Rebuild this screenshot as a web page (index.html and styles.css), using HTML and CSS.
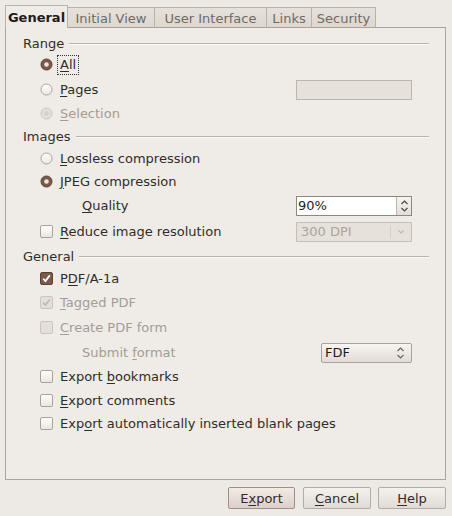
FILE: index.html
```html
<!DOCTYPE html>
<html>
<head>
<meta charset="utf-8">
<link rel="stylesheet" href="styles.css">
</head>
<body>
<div class="dialog">
  <div class="tabs">
    <div class="tab active">General</div>
    <div class="tab w-iv">Initial View</div>
    <div class="tab w-ui">User Interface</div>
    <div class="tab w-li">Links</div>
    <div class="tab w-se">Security</div>
  </div>
  <div class="panel">
    <div class="section">Range</div>
    <div class="row m0">
      <svg class="ind" viewBox="0 0 13 13"><circle cx="6.5" cy="6.5" r="5.5" fill="#7a5949" stroke="#5c4134"/><circle cx="6.5" cy="6.5" r="2.3" fill="#efe6e1"/></svg>
      <span class="label focus"><u>A</u>ll</span>
    </div>
    <div class="row m2">
      <svg class="ind" viewBox="0 0 13 13"><defs><linearGradient id="rg" x1="0" y1="0" x2="0" y2="1"><stop offset="0" stop-color="#ffffff"/><stop offset="1" stop-color="#ebe7e2"/></linearGradient></defs><circle cx="6.5" cy="6.5" r="5.5" fill="url(#rg)" stroke="#aaa299"/></svg>
      <span class="label"><u>P</u>ages</span>
      <div class="field disabled-field"></div>
    </div>
    <div class="row m1">
      <svg class="ind" viewBox="0 0 13 13"><circle cx="6.5" cy="6.5" r="5.5" fill="#e4dfda" stroke="#cbc5be"/><circle cx="6.5" cy="6.5" r="2.3" fill="#d6d0ca"/></svg>
      <span class="label dis"><u>S</u>election</span>
    </div>
    <div class="section m1">Images</div>
    <div class="row m1">
      <svg class="ind" viewBox="0 0 13 13"><circle cx="6.5" cy="6.5" r="5.5" fill="url(#rg)" stroke="#aaa299"/></svg>
      <span class="label"><u>L</u>ossless compression</span>
    </div>
    <div class="row m0">
      <svg class="ind" viewBox="0 0 13 13"><circle cx="6.5" cy="6.5" r="5.5" fill="#7a5949" stroke="#5c4134"/><circle cx="6.5" cy="6.5" r="2.3" fill="#efe6e1"/></svg>
      <span class="label"><u>J</u>PEG compression</span>
    </div>
    <div class="row m1 indent">
      <span class="label"><u>Q</u>uality</span>
      <div class="field spin">
        <span class="spin-text">90%</span>
        <span class="spin-btn">
          <svg viewBox="0 0 9 14" width="9" height="14"><path d="M1.5 5 L4.5 2 L7.5 5 M1.5 9 L4.5 12 L7.5 9" fill="none" stroke="#4d4843" stroke-width="1.2"/></svg>
        </span>
      </div>
    </div>
    <div class="row m3">
      <svg class="ind" viewBox="0 0 13 13"><defs><linearGradient id="cg" x1="0" y1="0" x2="0" y2="1"><stop offset="0" stop-color="#ffffff"/><stop offset="1" stop-color="#e9e5e0"/></linearGradient></defs><rect x="0.5" y="0.5" width="12" height="12" rx="1.5" fill="url(#cg)" stroke="#aaa299"/></svg>
      <span class="label"><u>R</u>educe image resolution</span>
      <div class="field combo-dis">
        <span class="combo-text">300 DPI</span>
        <span class="combo-arrow">
          <svg viewBox="0 0 8 6" width="8" height="6"><path d="M1.5 1.5 L4 4 L6.5 1.5" fill="none" stroke="#bdb6ae" stroke-width="1.1"/></svg>
        </span>
      </div>
    </div>
    <div class="section m3">General</div>
    <div class="row m1">
      <svg class="ind" viewBox="0 0 13 13"><rect x="0.5" y="0.5" width="12" height="12" rx="1.5" fill="#7a5949" stroke="#5c4134"/><path d="M3.2 6.6 L5.4 9 L9.8 3.4" fill="none" stroke="#ffffff" stroke-width="1.8"/></svg>
      <span class="label">P<u>D</u>F/A-1a</span>
    </div>
    <div class="row m1">
      <svg class="ind" viewBox="0 0 13 13"><rect x="0.5" y="0.5" width="12" height="12" rx="1.5" fill="#e4dfda" stroke="#cbc5be"/><path d="M3.2 6.6 L5.4 9 L9.8 3.4" fill="none" stroke="#bfb8b1" stroke-width="1.6"/></svg>
      <span class="label dis"><u>T</u>agged PDF</span>
    </div>
    <div class="row m2">
      <svg class="ind" viewBox="0 0 13 13"><rect x="0.5" y="0.5" width="12" height="12" rx="1.5" fill="#e4dfda" stroke="#cbc5be"/></svg>
      <span class="label dis"><u>C</u>reate PDF form</span>
    </div>
    <div class="row m2 indent">
      <span class="label dis">Submit <u>f</u>ormat</span>
      <div class="field combo">
        <span class="combo-text dark">FDF</span>
        <span class="combo-updown">
          <svg viewBox="0 0 9 14" width="9" height="14"><path d="M1.5 5 L4.5 2 L7.5 5 M1.5 9 L4.5 12 L7.5 9" fill="none" stroke="#6a645e" stroke-width="1.2"/></svg>
        </span>
      </div>
    </div>
    <div class="row m1">
      <svg class="ind" viewBox="0 0 13 13"><rect x="0.5" y="0.5" width="12" height="12" rx="1.5" fill="url(#cg)" stroke="#aaa299"/></svg>
      <span class="label">Export <u>b</u>ookmarks</span>
    </div>
    <div class="row m1">
      <svg class="ind" viewBox="0 0 13 13"><rect x="0.5" y="0.5" width="12" height="12" rx="1.5" fill="url(#cg)" stroke="#aaa299"/></svg>
      <span class="label"><u>E</u>xport comments</span>
    </div>
    <div class="row m0">
      <svg class="ind" viewBox="0 0 13 13"><rect x="0.5" y="0.5" width="12" height="12" rx="1.5" fill="url(#cg)" stroke="#aaa299"/></svg>
      <span class="label">Exp<u>o</u>rt automatically inserted blank pages</span>
    </div>
  </div>
  <div class="buttons">
    <div class="btn default">E<u>x</u>port</div>
    <div class="btn"><u>C</u>ancel</div>
    <div class="btn"><u>H</u>elp</div>
  </div>
</div>
</body>
</html>
```

FILE: styles.css
```css
html, body {
  margin: 0;
  padding: 0;
}
body {
  width: 452px;
  height: 516px;
  background: #ede9e4;
  font-family: "DejaVu Sans", "Liberation Sans", sans-serif;
  font-size: 13px;
  color: #2f2d2b;
  overflow: hidden;
}
u {
  text-decoration: underline;
  text-underline-offset: 2px;
}
.dialog {
  display: flex;
  flex-direction: column;
  padding-top: 5px;
}
.tabs {
  display: flex;
  align-items: flex-end;
  padding-left: 5px;
  height: 23px;
  margin-bottom: -1px;
  position: relative;
  z-index: 1;
}
.tab {
  box-sizing: border-box;
  height: 20px;
  margin-bottom: 1px;
  border: 1px solid #bab3aa;
  border-bottom: none;
  border-left: none;
  background: linear-gradient(#e6e1db, #ddd7d0);
  color: #6f6a65;
  display: flex;
  align-items: center;
  justify-content: center;
  padding-top: 1px;
  white-space: nowrap;
}
.tab.active {
  width: 63px;
  height: 23px;
  margin-bottom: 0;
  border-left: 1px solid #bab3aa;
  border-right: 1px solid #bab3aa;
  background: #efebe7;
  color: #1f1d1b;
  font-weight: bold;
  padding-top: 0;
}
.w-iv { width: 87px; }
.w-ui { width: 112px; }
.w-li { width: 45px; }
.w-se { width: 64px; }

.panel {
  box-sizing: border-box;
  margin-left: 5px;
  width: 441px;
  height: 453px;
  border: 1px solid #aaa39b;
  background: #efebe7;
  padding-top: 5px;
  display: flex;
  flex-direction: column;
}
.section {
  height: 20px;
  display: flex;
  align-items: center;
  gap: 5px;
  padding-left: 17px;
  padding-right: 16px;
  color: #2f2d2b;
}
.section::after {
  content: "";
  flex: 1;
  height: 0;
  border-top: 1px solid #b9b2a9;
  border-bottom: 1px solid #fbfaf8;
  margin-top: 1px;
}
.row {
  height: 23px;
  display: flex;
  align-items: center;
  padding-left: 34px;
  padding-right: 33px;
}
.row.indent {
  padding-left: 76px;
}
.m0 { margin-top: 0; }
.m1 { margin-top: 1px; }
.m2 { margin-top: 2px; }
.m3 { margin-top: 3px; }
.ind {
  width: 13px;
  height: 13px;
  flex: none;
  margin-right: 7px;
}
.label {
  white-space: nowrap;
  line-height: 16px;
}
.label.focus {
  outline: 1px dotted #3a3632;
  outline-offset: 1px;
  padding: 0 1px;
  margin-left: -1px;
}
.label.dis {
  color: #a39d96;
}
.field {
  box-sizing: border-box;
  margin-left: auto;
  width: 116px;
  height: 20px;
  flex: none;
}
.disabled-field {
  background: #e6e1db;
  border: 1px solid #bcb5ad;
}
.spin {
  display: flex;
  border: 1px solid #8e877f;
  background: #ffffff;
}
.spin-text {
  flex: 1;
  padding-left: 1px;
  line-height: 18px;
  color: #1f1d1b;
}
.spin-btn {
  width: 14px;
  border-left: 1px solid #bdb6ae;
  background: linear-gradient(#f6f3f0, #e3ded8);
  display: flex;
  align-items: center;
  justify-content: center;
}
.combo-dis {
  display: flex;
  border: 1px solid #c6bfb7;
  background: #e6e1db;
}
.combo-text {
  flex: 1;
  padding-left: 4px;
  line-height: 18px;
  color: #aaa49d;
}
.combo-text.dark {
  color: #1f1d1b;
  padding-left: 3px;
}
.combo-arrow {
  width: 20px;
  border-left: 1px solid #d3cdc6;
  margin: 2px 0;
  display: flex;
  align-items: center;
  justify-content: center;
}
.combo {
  width: 91px;
  display: flex;
  border: 1px solid #aaa299;
  border-radius: 2px;
  background: linear-gradient(#f7f4f1, #e2dcd5);
}
.combo-updown {
  width: 22px;
  display: flex;
  align-items: center;
  justify-content: center;
}
.buttons {
  display: flex;
  justify-content: flex-end;
  gap: 7px;
  padding-right: 6px;
  margin-top: 7px;
}
.btn {
  box-sizing: border-box;
  width: 68px;
  height: 22px;
  border: 1px solid #b3aca4;
  border-radius: 2px;
  background: linear-gradient(#f4f1ed, #e1dbd4);
  display: flex;
  align-items: center;
  justify-content: center;
  color: #2f2d2b;
}
.btn.default {
  width: 67px;
  border-color: #a08f86;
  background: linear-gradient(#f3ebe6, #dcd0c8);
  margin-right: 1px;
}
```
